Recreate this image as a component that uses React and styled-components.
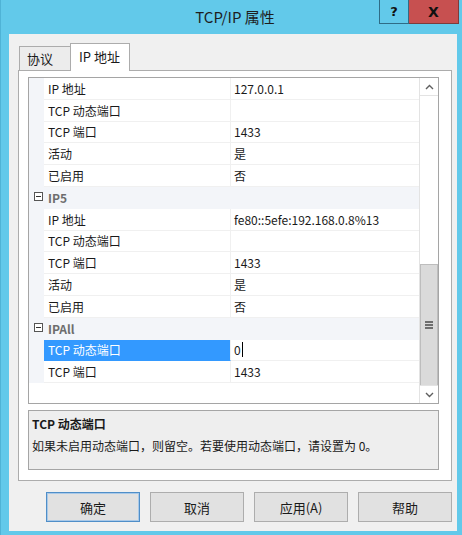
import React from "react";
import styled, { createGlobalStyle } from "styled-components";

const GlobalStyle = createGlobalStyle`
  html, body {
    margin: 0;
    padding: 0;
    background: #ffffff;
  }
  * {
    box-sizing: border-box;
  }
  body {
    font-family: "Noto Sans CJK SC", "Liberation Sans", sans-serif;
    font-size: 12px;
    color: #1a1a1a;
  }
`;

const Window = styled.div`
  width: 462px;
  height: 535px;
  background: #62c9ea;
  border-left: 1px solid #4fb3d6;
  display: flex;
  flex-direction: column;
  padding: 0 5px 4px 8px;
`;

const TitleBar = styled.div`
  height: 34px;
  display: grid;
  grid-template-columns: 1fr auto 1fr;
  align-items: start;
`;

const Title = styled.div`
  grid-column: 2;
  height: 34px;
  line-height: 34px;
  font-size: 15px;
  color: #1e1e1e;
  padding-left: 4px;
`;

const Controls = styled.div`
  grid-column: 3;
  justify-self: end;
  display: flex;
  margin-right: -2px;
`;

const CaptionButton = styled.div`
  width: ${(p) => p.$w}px;
  height: 24px;
  display: flex;
  align-items: center;
  justify-content: center;
  background: ${(p) => (p.$close ? "#c75050" : "#62c9ea")};
  border: 1px solid ${(p) => (p.$close ? "#7d3b3b" : "#2f6c86")};
  border-top: none;
  border-left: ${(p) => (p.$close ? "none" : "1px solid #2f6c86")};
  font-family: "DejaVu Sans", sans-serif;
  font-weight: bold;
  font-size: ${(p) => (p.$close ? 14 : 13)}px;
  color: #111;
`;

const Body = styled.div`
  flex: 1;
  background: #f0f0f0;
  display: flex;
  flex-direction: column;
  padding: 10px 5px 9px 9px;
`;

const TabStrip = styled.div`
  display: flex;
  align-items: flex-end;
  height: 27px;
  padding-left: 1px;
  position: relative;
  z-index: 1;
  margin-bottom: -1px;
`;

const Tab = styled.div`
  width: ${(p) => (p.$active ? 60 : 52)}px;
  height: ${(p) => (p.$active ? 28 : 25)}px;
  padding: 0 0 ${(p) => (p.$active ? 2 : 0)}px ${(p) => (p.$active ? 8 : 7)}px;
  display: flex;
  align-items: center;
  font-size: 13px;
  color: #1a1a1a;
  background: ${(p) => (p.$active ? "#ffffff" : "#ececec")};
  border: 1px solid #acacac;
  border-bottom: ${(p) => (p.$active ? "none" : "1px solid #acacac")};
  margin-left: ${(p) => (p.$active ? -1 : 0)}px;
`;

const Panel = styled.div`
  flex: 1;
  background: #ffffff;
  border: 1px solid #acacac;
  display: flex;
  flex-direction: column;
  gap: 6px;
  padding: 6px 12px 10px 9px;
`;

const PropGrid = styled.div`
  flex: 1;
  border: 1px solid #a5a5a5;
  display: flex;
  overflow: hidden;
`;

const Rows = styled.div`
  flex: 1;
  background: #ffffff;
  overflow: hidden;
`;

const Row = styled.div`
  height: 21.8px;
  display: grid;
  grid-template-columns: 15px 187px 1fr;
  background: ${(p) => (p.$category ? "#f3f5f9" : "#ffffff")};
`;

const Gutter = styled.div`
  background: #f3f5f9;
  display: flex;
  align-items: center;
  justify-content: center;
`;

const Expander = styled.span`
  width: 9px;
  height: 9px;
  border: 1px solid #555;
  background: #fff;
  position: relative;
  margin-left: 4px;
  margin-top: -3px;

  &::after {
    content: "";
    position: absolute;
    left: 1px;
    right: 1px;
    top: 3px;
    height: 1px;
    background: #333;
  }
`;

const CategoryName = styled.div`
  grid-column: 2 / 4;
  display: flex;
  align-items: center;
  padding-left: 4px;
  font-weight: bold;
  color: #6d6d6d;
`;

const NameCell = styled.div`
  display: flex;
  align-items: center;
  padding-left: 4px;
  white-space: nowrap;
  background: ${(p) => (p.$selected ? "#3399ff" : "transparent")};
  color: ${(p) => (p.$selected ? "#ffffff" : "#1a1a1a")};
  border-bottom: 1px solid ${(p) => (p.$selected ? "#3399ff" : "#f0f0f0")};
  border-right: 1px solid #f0f0f0;
`;

const ValueCell = styled.div`
  display: flex;
  align-items: center;
  padding-left: 3px;
  white-space: nowrap;
  border-bottom: 1px solid #f0f0f0;
`;

const Caret = styled.span`
  display: inline-block;
  width: 1px;
  height: 15px;
  background: #000;
  margin-left: 1px;
`;

const ScrollBar = styled.div`
  width: 19px;
  display: flex;
  flex-direction: column;
  background: #ffffff;
  border-left: 1px solid #e3e3e3;
`;

const ArrowButton = styled.div`
  height: 18px;
  display: flex;
  align-items: center;
  justify-content: center;
  border-bottom: ${(p) => (p.$up ? "1px solid #e3e3e3" : "none")};
  border-top: ${(p) => (p.$up ? "none" : "1px solid #e3e3e3")};
`;

const Track = styled.div`
  flex: 1;
  display: flex;
  flex-direction: column;
  justify-content: flex-end;
`;

const Thumb = styled.div`
  height: 122px;
  background: #dadada;
  border: 1px solid #bdbdbd;
  display: flex;
  flex-direction: column;
  align-items: center;
  justify-content: center;
  gap: 1px;
  margin-bottom: -1px;
`;

const Grip = styled.span`
  width: 8px;
  height: 2px;
  background: #6e6e6e;
`;

const Description = styled.div`
  height: 60px;
  background: #eeeeee;
  border: 1px solid #a5a5a5;
  padding: 4px 3px;
  display: flex;
  flex-direction: column;
  gap: 4px;
`;

const DescTitle = styled.div`
  font-weight: bold;
  line-height: 18px;
`;

const DescText = styled.div`
  line-height: 18px;
`;

const ButtonRow = styled.div`
  display: flex;
  justify-content: flex-end;
  gap: 10px;
  margin-top: 11px;
`;

const Button = styled.div`
  width: 94px;
  height: 30px;
  display: flex;
  align-items: center;
  justify-content: center;
  font-size: 13px;
  background: #e1e1e1;
  border: 1px solid ${(p) => (p.$default ? "#4f8ec8" : "#adadad")};
  box-shadow: ${(p) => (p.$default ? "inset 0 0 0 1px #a9c9e8" : "none")};
`;

const Chevron = ({ up }) => (
  <svg width="9" height="6" viewBox="0 0 9 6">
    <polyline
      points={up ? "1,5 4.5,1.5 8,5" : "1,1 4.5,4.5 8,1"}
      fill="none"
      stroke="#5f5f5f"
      strokeWidth="1.4"
    />
  </svg>
);

const rows = [
  { name: "IP 地址", value: "127.0.0.1" },
  { name: "TCP 动态端口", value: "" },
  { name: "TCP 端口", value: "1433" },
  { name: "活动", value: "是" },
  { name: "已启用", value: "否" },
  { category: "IP5" },
  { name: "IP 地址", value: "fe80::5efe:192.168.0.8%13" },
  { name: "TCP 动态端口", value: "" },
  { name: "TCP 端口", value: "1433" },
  { name: "活动", value: "是" },
  { name: "已启用", value: "否" },
  { category: "IPAll" },
  { name: "TCP 动态端口", value: "0", selected: true },
  { name: "TCP 端口", value: "1433" },
];

const App = () => {
  return (
    <>
      <GlobalStyle />
      <Window>
        <TitleBar>
          <Title>TCP/IP 属性</Title>
          <Controls>
            <CaptionButton $w={30}>?</CaptionButton>
            <CaptionButton $w={50} $close>
              X
            </CaptionButton>
          </Controls>
        </TitleBar>
        <Body>
          <TabStrip>
            <Tab>协议</Tab>
            <Tab $active>IP 地址</Tab>
          </TabStrip>
          <Panel>
            <PropGrid>
              <Rows>
                {rows.map((r, i) =>
                  r.category ? (
                    <Row key={i} $category>
                      <Gutter>
                        <Expander />
                      </Gutter>
                      <CategoryName>{r.category}</CategoryName>
                    </Row>
                  ) : (
                    <Row key={i}>
                      <Gutter />
                      <NameCell $selected={r.selected}>{r.name}</NameCell>
                      <ValueCell>
                        {r.value}
                        {r.selected && <Caret />}
                      </ValueCell>
                    </Row>
                  )
                )}
              </Rows>
              <ScrollBar>
                <ArrowButton $up>
                  <Chevron up />
                </ArrowButton>
                <Track>
                  <Thumb>
                    <Grip />
                    <Grip />
                    <Grip />
                  </Thumb>
                </Track>
                <ArrowButton>
                  <Chevron />
                </ArrowButton>
              </ScrollBar>
            </PropGrid>
            <Description>
              <DescTitle>TCP 动态端口</DescTitle>
              <DescText>
                如果未启用动态端口，则留空。若要使用动态端口，请设置为 0。
              </DescText>
            </Description>
          </Panel>
          <ButtonRow>
            <Button $default>确定</Button>
            <Button>取消</Button>
            <Button>应用(A)</Button>
            <Button>帮助</Button>
          </ButtonRow>
        </Body>
      </Window>
    </>
  );
};

export default App;
